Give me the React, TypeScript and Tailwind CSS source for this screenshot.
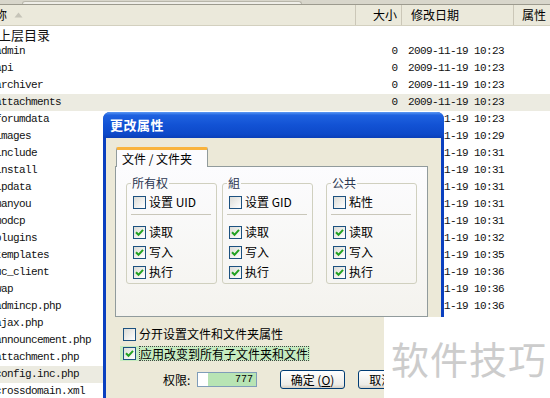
import React from 'react';

const mono = { fontFamily: '"Liberation Mono", "DejaVu Sans Mono", monospace' };
const cjk = { fontFamily: '"Noto Sans CJK SC", "Noto Sans", sans-serif' };

type Row = { name: string; size: string; date: string; hl?: boolean; cn?: boolean };

const rows: Row[] = [
  { name: '上层目录', size: '', date: '', cn: true },
  { name: 'admin', size: '0', date: '2009-11-19 10:23' },
  { name: 'api', size: '0', date: '2009-11-19 10:23' },
  { name: 'archiver', size: '0', date: '2009-11-19 10:23' },
  { name: 'attachments', size: '0', date: '2009-11-19 10:23', hl: true },
  { name: 'forumdata', size: '0', date: '2009-11-19 10:23' },
  { name: 'images', size: '0', date: '2009-11-19 10:29' },
  { name: 'include', size: '0', date: '2009-11-19 10:31' },
  { name: 'install', size: '0', date: '2009-11-19 10:31' },
  { name: 'ipdata', size: '0', date: '2009-11-19 10:31' },
  { name: 'manyou', size: '0', date: '2009-11-19 10:31' },
  { name: 'modcp', size: '0', date: '2009-11-19 10:31' },
  { name: 'plugins', size: '0', date: '2009-11-19 10:32' },
  { name: 'templates', size: '0', date: '2009-11-19 10:35' },
  { name: 'uc_client', size: '0', date: '2009-11-19 10:36' },
  { name: 'wap', size: '0', date: '2009-11-19 10:36' },
  { name: 'admincp.php', size: '2', date: '2009-11-19 10:36' },
  { name: 'ajax.php', size: '3', date: '2009-11-19 10:36' },
  { name: 'announcement.php', size: '2', date: '2009-11-19 10:36' },
  { name: 'attachment.php', size: '6', date: '2009-11-19 10:36' },
  { name: 'config.inc.php', size: '4', date: '2009-11-19 10:36', hl: true },
  { name: 'crossdomain.xml', size: '1', date: '2009-11-19 10:36' },
];

function Check({ checked }: { checked?: boolean }) {
  return (
    <span className="w-[13px] h-[13px] shrink-0 border border-[#1c5180] bg-[linear-gradient(135deg,#dcdcd7,#ffffff)] flex items-center justify-center">
      {checked && (
        <svg width="9" height="9" viewBox="0 0 9 9">
          <path d="M1 4.2 L3.5 6.8 L8 1.8" fill="none" stroke="#21a121" strokeWidth="2" />
        </svg>
      )}
    </span>
  );
}

function Opt({ label, checked }: { label: string; checked?: boolean }) {
  return (
    <div className="flex items-center gap-[3px] h-[14px] text-[12px] text-black">
      <Check checked={checked} />
      <span className="leading-[14px]">{label}</span>
    </div>
  );
}

function Group({ title, first, className }: { title: string; first: string; className: string }) {
  return (
    <fieldset className={`border border-[#d0d0bf] rounded-[3px] h-[108px] w-[91px] px-[6px] ${className}`}>
      <legend className="ml-[-2px] px-[1px] text-[12px] leading-[14px] text-[#2a3550]">{title}</legend>
      <div className="mt-[5px]">
        <Opt label={first} />
      </div>
      <div className="mt-[5px] mr-[-1px] ml-[-2px] border-t border-[#c9c7ba]" />
      <div className="mt-[10px] flex flex-col gap-[6px]">
        <Opt label="读取" checked />
        <Opt label="写入" checked />
        <Opt label="执行" checked />
      </div>
    </fieldset>
  );
}

export default function App() {
  return (
    <div className="relative w-[550px] h-[398px] overflow-hidden bg-white" style={cjk}>
      {/* toolbar remnant */}
      <div className="h-[5px] bg-[#d8d6cb] border-b border-[#9c9a8e] pl-[22px] pt-[1px]">
        <div className="h-[3px] w-[280px] rounded-t-[3px] bg-[#efeee8] border border-b-0 border-[#b8b6aa]" />
      </div>

      {/* header */}
      <div className="h-[21px] grid grid-cols-[356px_46px_112px_36px] bg-[#ebe9db] border-b border-[#d3d0bf] text-[12px] text-black">
        <div className="flex items-center border-r border-[#cbc7b8] ml-[-17px]">
          <span>名称</span>
          <svg className="ml-[7px]" width="9" height="6" viewBox="0 0 9 6">
            <path d="M0.5 5.5 L4.5 0.5 L8.5 5.5 Z" fill="#c6c4b8" />
          </svg>
        </div>
        <div className="flex items-center justify-end pr-[4px] border-r border-[#cbc7b8]">大小</div>
        <div className="flex items-center pl-[9px] border-r border-[#cbc7b8]">修改日期</div>
        <div className="flex items-center pl-[8px]">属性</div>
      </div>

      {/* file rows */}
      {rows.map((r) => (
        <div
          key={r.name}
          className={`h-[17px] grid grid-cols-[356px_46px_112px_36px] items-center text-[#111] ${r.hl ? 'bg-[#ecebe1]' : ''}`}
        >
          {r.cn ? (
            <span className="ml-[-2px] text-[13px] leading-[17px]">{r.name}</span>
          ) : (
            <span className="ml-[-5px] text-[11px] tracking-[-0.6px] leading-[17px]" style={mono}>{r.name}</span>
          )}
          <span className="text-right pr-[4px] text-[11px]" style={mono}>{r.size}</span>
          <span className="pl-[6px] text-[11px] tracking-[-0.6px] whitespace-nowrap" style={mono}>{r.date}</span>
          <span />
        </div>
      ))}

      {/* dialog */}
      <div className="absolute left-[103px] top-[112px] w-[341px] h-[300px] rounded-t-[7px] bg-[#0a40c0] px-[3px] flex flex-col">
        <div className="h-[26px] -mx-[3px] px-[7px] rounded-t-[7px] flex items-center bg-[linear-gradient(180deg,#5d9af5_0%,#1f62e0_12%,#1252d4_50%,#0d49c9_85%,#0a3fb8_100%)]">
          <span className="text-white font-bold text-[13px] tracking-[0.5px]">更改属性</span>
        </div>
        <div className="flex-1 bg-[#ece9d8] pl-[9px] pr-[13px] pt-[9px] text-[12px]">
          <div className="flex">
            <div className="ml-[1px] w-[92px] h-[20px] mb-[-1px] z-10 bg-[#fcfcfe] border-t-[3px] border-[#f9b33c] border-x border-x-[#919b9c] rounded-t-[2px] flex items-center pl-[5px] text-[12px] leading-[14px]">
              文件 / 文件夹
            </div>
          </div>
          <div className="h-[151px] border border-[#919b9c] bg-[linear-gradient(180deg,#fcfcfe,#f4f3ee)] flex items-start pt-[9px] pl-[10px]">
            <Group title="所有权" first="设置 UID" className="" />
            <Group title="組" first="设置 GID" className="ml-[5px]" />
            <Group title="公共" first="粘性" className="ml-[13px]" />
          </div>

          <div className="mt-[10px] pl-[8px]">
            <Opt label="分开设置文件和文件夹属性" />
          </div>
          <div className="mt-[5px] ml-[5px] w-[190px] h-[15px] bg-[#c6ebc0] pl-[3px] flex items-center">
            <Check checked />
            <span className="ml-[3px] leading-[13px] border border-dotted border-[#444]">应用改变到所有子文件夹和文件</span>
          </div>

          <div className="mt-[9px] flex items-center">
            <span className="ml-[48px] w-[34px]">权限:</span>
            <div className="w-[60px] h-[15px] border border-[#7f9db9] bg-white flex">
              <div className="ml-[10px] flex-1 bg-[#b8e4b4] text-right pr-[3px] text-[10px] leading-[13px]" style={mono}>777</div>
            </div>
            <div className="ml-[23px] w-[65px] h-[19px] rounded-[3px] border border-[#003c74] bg-[linear-gradient(180deg,#ffffff,#ecebe6_80%,#d6d0c5)] flex items-center justify-center text-[12px]">
              确定 (<span className="underline">O</span>)
            </div>
            <div className="ml-[13px] w-[65px] h-[19px] rounded-[3px] border border-[#003c74] bg-[linear-gradient(180deg,#ffffff,#ecebe6_80%,#d6d0c5)] flex items-center justify-center text-[12px] whitespace-nowrap">
              取消 (<span className="underline">C</span>)
            </div>
          </div>
        </div>
      </div>

      {/* watermark */}
      <div className="absolute left-[384px] top-[317px] w-[166px] h-[81px] bg-white flex items-center pl-[7px]">
        <span className="text-[38px] leading-none text-[#cccccc] tracking-[1px]">软件技巧</span>
      </div>
    </div>
  );
}
